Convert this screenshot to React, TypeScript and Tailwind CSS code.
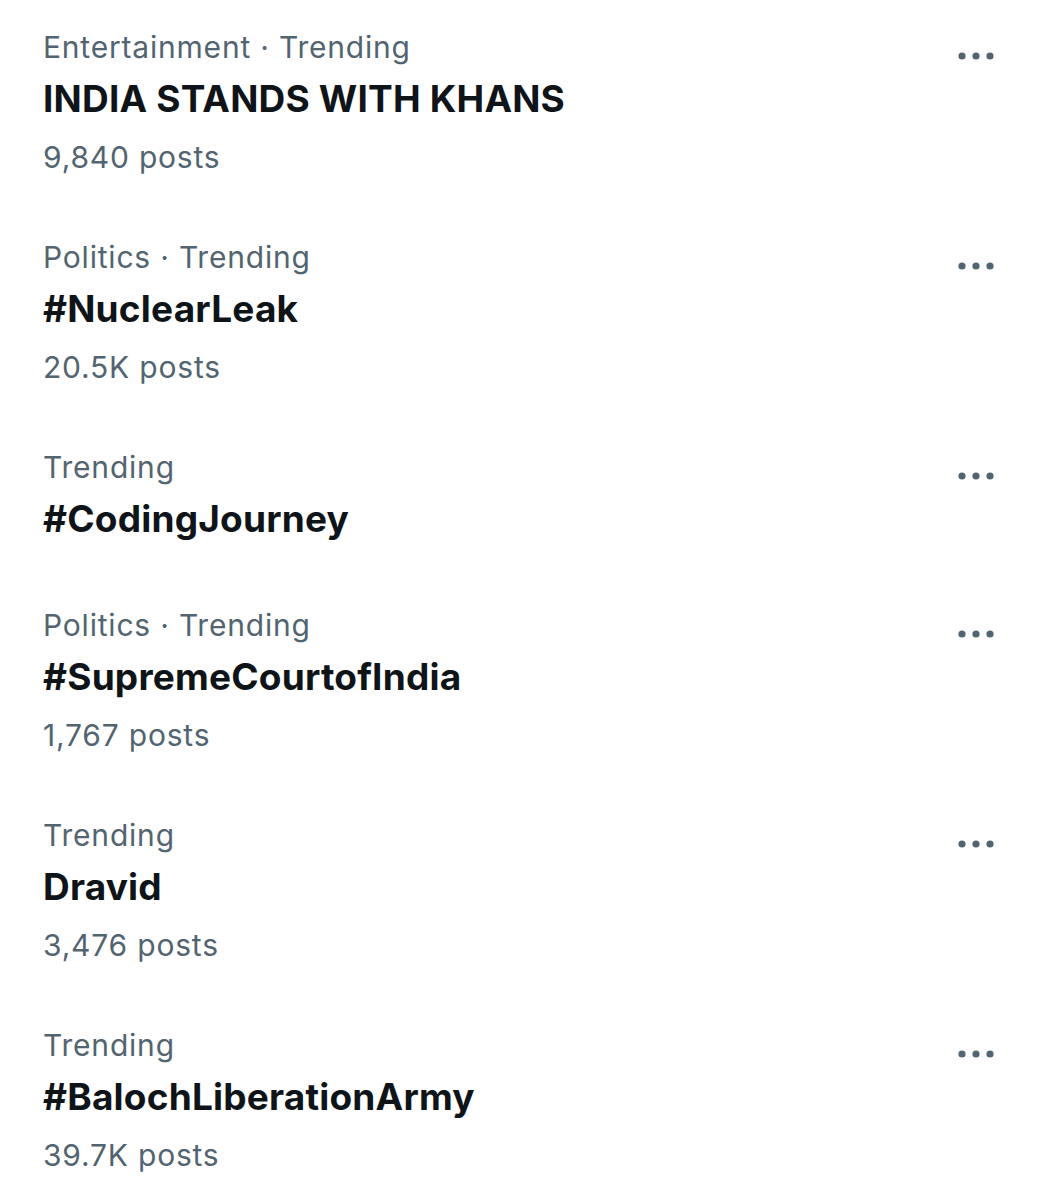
import React from 'react';

interface Trend {
  category: string;
  title: string;
  posts?: string;
}

const trends: Trend[] = [
  { category: 'Entertainment · Trending', title: 'INDIA STANDS WITH KHANS', posts: '9,840 posts' },
  { category: 'Politics · Trending', title: '#NuclearLeak', posts: '20.5K posts' },
  { category: 'Trending', title: '#CodingJourney' },
  { category: 'Politics · Trending', title: '#SupremeCourtofIndia', posts: '1,767 posts' },
  { category: 'Trending', title: 'Dravid', posts: '3,476 posts' },
  { category: 'Trending', title: '#BalochLiberationArmy', posts: '39.7K posts' },
];

const MoreIcon: React.FC = () => (
  <svg width="36" height="8" viewBox="0 0 36 8" fill="#536471">
    <circle cx="4" cy="4" r="3.6" />
    <circle cx="18" cy="4" r="3.6" />
    <circle cx="32" cy="4" r="3.6" />
  </svg>
);

const TrendRow: React.FC<{ trend: Trend }> = ({ trend }) => {
  return (
    <div className="flex items-start justify-between pl-[43px] pr-[49px] pt-[27px] pb-[33px]">
      <div className="flex flex-col">
        <div className="text-[30px] leading-[40px] tracking-[0.8px] text-[#536471]">{trend.category}</div>
        <div className="mt-[6px] text-[37px] leading-[52px] tracking-[0.2px] font-bold text-[#0f1419]">
          {trend.title}
        </div>
        {trend.posts && (
          <div className="mt-[12px] text-[30px] leading-[40px] tracking-[0.8px] text-[#536471]">{trend.posts}</div>
        )}
      </div>
      <div className="mt-[25px]">
        <MoreIcon />
      </div>
    </div>
  );
};

export default function App() {
  return (
    <div className="min-h-[1200px] bg-white" style={{ fontFamily: 'Inter, "Noto Sans", sans-serif' }}>
      {trends.map((t, i) => (
        <TrendRow key={i} trend={t} />
      ))}
    </div>
  );
}
